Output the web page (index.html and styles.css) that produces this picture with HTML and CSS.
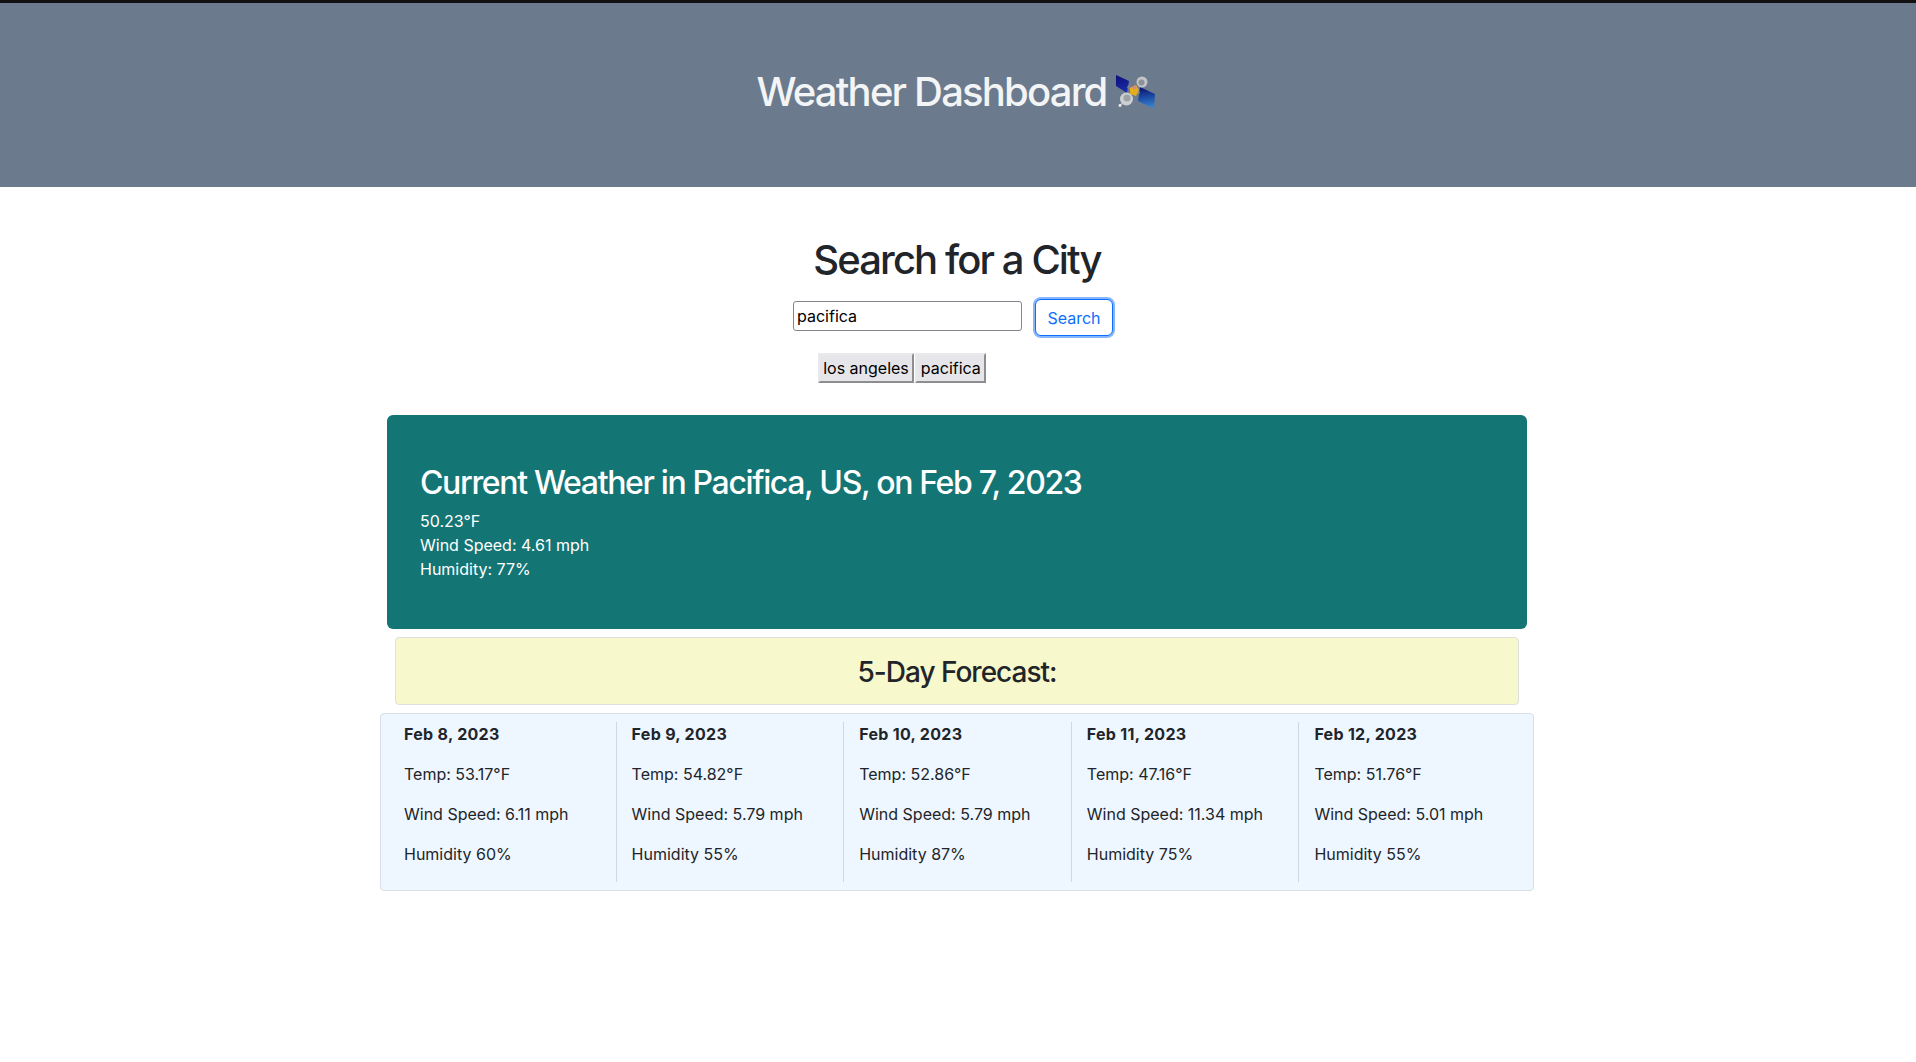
FILE: index.html
```html
<!DOCTYPE html>
<html lang="en">
<head>
    <meta charset="UTF-8">
    <meta name="viewport" content="width=device-width, initial-scale=1.0">
    <title>Weather Dashboard</title>
    <link rel="stylesheet" href="styles.css">
</head>
<body>
    <header class="site-header">
        <h1 class="site-title">Weather Dashboard
            <svg class="satellite" viewBox="0 0 40 34" width="40" height="34" aria-hidden="true">
                <defs>
                    <linearGradient id="panelA" x1="0" y1="0" x2="0.3" y2="1">
                        <stop offset="0" stop-color="#0d0d78"/>
                        <stop offset="1" stop-color="#1a2aa8"/>
                    </linearGradient>
                    <linearGradient id="panelB" x1="0" y1="0" x2="0.1" y2="1">
                        <stop offset="0" stop-color="#0a0d68"/>
                        <stop offset="0.5" stop-color="#1b4aa4"/>
                        <stop offset="1" stop-color="#3a86cf"/>
                    </linearGradient>
                </defs>
                <path d="M1 0 14 6 12 18 1 11Z" fill="url(#panelA)"/>
                <path d="M25 12 40 19 39 34 23 26Z" fill="url(#panelB)"/>
                <path d="M13 10 25 17 24 20 12 13Z" fill="#7f838a"/>
                <path d="M15 13 21 10 24 15 21 21 15 19Z" fill="#e3ad1e"/>
                <circle cx="19.5" cy="12.5" r="2" fill="#d88a80"/>
                <circle cx="27" cy="7" r="5.5" fill="#c2c5c8"/>
                <circle cx="26.5" cy="7.5" r="3" fill="#8d9298"/>
                <path d="M5.5 30 9 27" stroke="#b9bcc0" stroke-width="1.6"/>
                <circle cx="11.5" cy="24" r="6.5" fill="#cdd0d2"/>
                <circle cx="12" cy="23" r="3.6" fill="#9ea2a6"/>
                <circle cx="5" cy="30.5" r="1.4" fill="#ececec"/>
            </svg>
        </h1>
    </header>

    <main class="content">
        <h2 class="search-title">Search for a City</h2>
        <form class="search-form">
            <input class="search-input" type="text" value="pacifica">
            <button class="search-btn" type="button">Search</button>
        </form>
        <div class="history">
            <button class="history-btn" type="button">los angeles</button>
            <button class="history-btn" type="button">pacifica</button>
        </div>

        <section class="current">
            <h2 class="current-title">Current Weather in Pacifica, US, on Feb 7, 2023</h2>
            <div>50.23°F</div>
            <div>Wind Speed: 4.61 mph</div>
            <div>Humidity: 77%</div>
        </section>

        <div class="forecast-head">
            <h3 class="forecast-title">5-Day Forecast:</h3>
        </div>

        <section class="forecast">
            <div class="day">
                <p class="day-date">Feb 8, 2023</p>
                <p>Temp: 53.17°F</p>
                <p>Wind Speed: 6.11 mph</p>
                <p>Humidity 60%</p>
            </div>
            <div class="day">
                <p class="day-date">Feb 9, 2023</p>
                <p>Temp: 54.82°F</p>
                <p>Wind Speed: 5.79 mph</p>
                <p>Humidity 55%</p>
            </div>
            <div class="day">
                <p class="day-date">Feb 10, 2023</p>
                <p>Temp: 52.86°F</p>
                <p>Wind Speed: 5.79 mph</p>
                <p>Humidity 87%</p>
            </div>
            <div class="day">
                <p class="day-date">Feb 11, 2023</p>
                <p>Temp: 47.16°F</p>
                <p>Wind Speed: 11.34 mph</p>
                <p>Humidity 75%</p>
            </div>
            <div class="day">
                <p class="day-date">Feb 12, 2023</p>
                <p>Temp: 51.76°F</p>
                <p>Wind Speed: 5.01 mph</p>
                <p>Humidity 55%</p>
            </div>
        </section>
    </main>
</body>
</html>
```

FILE: styles.css
```css
* {
    box-sizing: border-box;
}
body {
    font-family: 'Inter', 'Liberation Sans', sans-serif;
    font-size: 16px;
    line-height: 1.5;
    color: #212529;
    background-color: #fff;
    margin: 0;
    border-top: 3px solid #111;
}
.site-header {
    height: 184px;
    padding: 0 5px 6px 0;
    background-color: #6c7a8d;
    display: flex;
    justify-content: center;
    align-items: center;
}
.site-title {
    margin: 0;
    display: flex;
    align-items: center;
    gap: 8px;
    font-size: 40px;
    font-weight: 500;
    line-height: 1.2;
    letter-spacing: -1.8px;
    color: #f3f4f6;
}
.content {
    display: flex;
    flex-direction: column;
    align-items: center;
    padding-right: 2px;
}
.search-title {
    margin: 49px 0 13px;
    font-size: 40px;
    font-weight: 500;
    line-height: 1.2;
    letter-spacing: -1.9px;
}
.search-form {
    display: flex;
    align-items: flex-start;
    gap: 13px;
    margin-right: 8px;
}
.search-input {
    width: 229px;
    height: 30px;
    margin-top: 4px;
    padding: 1px 3px;
    border: 1px solid #85858f;
    border-radius: 3px;
    font-family: inherit;
    font-size: 16px;
    color: #000;
}
.search-btn {
    width: 78px;
    height: 37px;
    margin-top: 2px;
    padding: 0;
    background-color: #fff;
    border: 1px solid #0d6efd;
    border-radius: 6px;
    box-shadow: 0 0 0 2px #86b7fe;
    font-family: inherit;
    font-size: 16px;
    color: #0d6efd;
}
.history {
    display: flex;
    gap: 1px;
    margin: 17px 110px 0 0;
}
.history-btn {
    height: 30px;
    padding: 0 3.5px;
    background-color: #e6e6ea;
    border: 2px solid;
    border-color: #e9e9ec #8e8e90 #8e8e90 #e9e9ec;
    font-family: inherit;
    font-size: 16px;
    color: #000;
}
.current {
    width: 1140px;
    height: 214px;
    margin-top: 32px;
    padding: 49px 33px 48px;
    background-color: #147575;
    border-radius: 6px;
    color: #fff;
}
.current-title {
    margin: 0 0 7px;
    font-size: 32px;
    font-weight: 500;
    line-height: 1.2;
    letter-spacing: -1.35px;
}
.forecast-head {
    width: 1124px;
    height: 68px;
    margin-top: 8px;
    padding-top: 3px;
    background-color: #f7f8cb;
    border: 1px solid #dfe0dc;
    border-radius: 4px;
    display: flex;
    justify-content: center;
    align-items: center;
}
.forecast-title {
    margin: 0;
    font-size: 28px;
    font-weight: 500;
    line-height: 1.2;
    letter-spacing: -1px;
}
.forecast {
    width: 1154px;
    height: 178px;
    margin-top: 8px;
    padding: 8px 7px;
    background-color: #eef6ff;
    border: 1px solid #d9dfe6;
    border-radius: 4px;
    display: grid;
    grid-template-columns: repeat(5, 1fr);
}
.day {
    padding-left: 15px;
    border-left: 1px solid #d0d7e0;
}
.day:first-child {
    padding-left: 16px;
    border-left: none;
}
.day p {
    margin: 0 0 16px;
}
.day .day-date {
    font-weight: 700;
    letter-spacing: 0.3px;
}
```
